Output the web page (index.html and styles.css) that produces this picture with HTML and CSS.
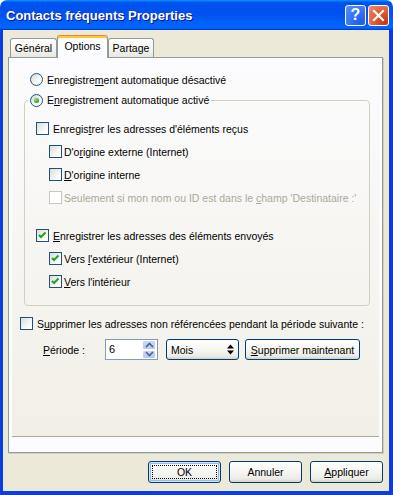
FILE: index.html
```html
<!DOCTYPE html>
<html lang="fr">
<head>
    <meta charset="UTF-8">
    <title>Contacts fréquents Properties</title>
    <link rel="stylesheet" href="styles.css">
</head>
<body>

<div class="window">
    <!-- barre de titre -->
    <div class="titlebar">
        <span class="title">Contacts fréquents Properties</span>
        <span class="tb-btn help">?</span>
        <span class="tb-btn close">
            <svg width="13" height="13" viewBox="0 0 13 13"><path d="M2 2 L11 11 M11 2 L2 11" stroke="#fff" stroke-width="2.2" stroke-linecap="square"/></svg>
        </span>
    </div>

    <div class="client">
        <div class="tabs">
            <div class="tab tab-general">Général</div>
            <div class="tab tab-options active">Options</div>
            <div class="tab tab-partage">Partage</div>
        </div>

        <div class="panel">
            <div class="page">
                <div class="row radio-row">
                    <span class="rb"></span>
                    <span>Enregistre<u>m</u>ent automatique désactivé</span>
                </div>

                <fieldset class="group">
                    <legend>
                        <span class="row">
                            <span class="rb on"><span class="dot"></span></span>
                            <span>E<u>n</u>registrement automatique activé</span>
                        </span>
                    </legend>
                    <div class="group-body">
                        <div class="row">
                            <span class="cb"></span>
                            <span>Enregis<u>t</u>rer les adresses d'éléments reçus</span>
                        </div>
                        <div class="row sub">
                            <span class="cb"></span>
                            <span>D'o<u>r</u>igine externe (Internet)</span>
                        </div>
                        <div class="row sub">
                            <span class="cb"></span>
                            <span><u>D</u>'origine interne</span>
                        </div>
                        <div class="row sub disabled">
                            <span class="cb off"></span>
                            <span>Seulement si mon nom ou ID est dans le <u>c</u>hamp 'Destinataire :'</span>
                        </div>

                        <div class="row spaced">
                            <span class="cb"><svg class="tick" width="11" height="11" viewBox="0 0 11 11"><polyline points="2,5 4,7 8.5,2.5" fill="none" stroke="#21A121" stroke-width="2"/></svg></span>
                            <span><u>E</u>nregistrer les adresses des éléments envoyés</span>
                        </div>
                        <div class="row sub">
                            <span class="cb"><svg class="tick" width="11" height="11" viewBox="0 0 11 11"><polyline points="2,5 4,7 8.5,2.5" fill="none" stroke="#21A121" stroke-width="2"/></svg></span>
                            <span>Vers <u>l</u>'extérieur (Internet)</span>
                        </div>
                        <div class="row sub">
                            <span class="cb"><svg class="tick" width="11" height="11" viewBox="0 0 11 11"><polyline points="2,5 4,7 8.5,2.5" fill="none" stroke="#21A121" stroke-width="2"/></svg></span>
                            <span><u>V</u>ers l'intérieur</span>
                        </div>
                    </div>
                </fieldset>

                <div class="row purge-row">
                    <span class="cb"></span>
                    <span>S<u>u</u>pprimer les adresses non référencées pendant la période suivante :</span>
                </div>

                <div class="period-row">
                    <span class="period-label"><u>P</u>ériode :</span>
                    <span class="spin-input">6</span>
                    <span class="spin">
                        <span class="spin-half">
                            <svg width="9" height="6" viewBox="0 0 9 6"><polyline points="1,5 4.5,1.5 8,5" fill="none" stroke="#4D6185" stroke-width="1.6"/></svg>
                        </span>
                        <span class="spin-half">
                            <svg width="9" height="6" viewBox="0 0 9 6"><polyline points="1,1 4.5,4.5 8,1" fill="none" stroke="#4D6185" stroke-width="1.6"/></svg>
                        </span>
                    </span>
                    <span class="select">
                        <span class="select-text">Mois</span>
                        <svg width="7" height="11" viewBox="0 0 7 11"><polygon points="0,4.5 3.5,0.5 7,4.5" fill="#000"/><polygon points="0,6.5 3.5,10.5 7,6.5" fill="#000"/></svg>
                    </span>
                    <span class="btn purge-btn"><u>S</u>upprimer maintenant</span>
                </div>
            </div>
        </div>

        <div class="buttons">
            <span class="btn default"><span class="focus">OK</span></span>
            <span class="btn">Annuler</span>
            <span class="btn"><u>A</u>ppliquer</span>
        </div>
    </div>
</div>

</body>
</html>
```

FILE: styles.css
```css
* {
    box-sizing: border-box;
}
body {
    margin: 0;
    font-family: "Liberation Sans", Arial, sans-serif;
    font-size: 10.5px;
    color: #000;
    background: #fff;
}
u {
    text-decoration: underline;
    text-underline-offset: 1px;
}
.window {
    width: 393px;
    height: 495px;
    display: flex;
    flex-direction: column;
    border-radius: 7px 7px 0 0;
    overflow: hidden;
}

/* barre de titre */
.titlebar {
    height: 30px;
    flex: none;
    display: flex;
    align-items: center;
    padding: 0 4px 0 6px;
    background: linear-gradient(to bottom, #0997ff 0%, #0053ee 8%, #0050ee 40%, #0066ff 88%, #0066ff 93%, #005bff 95%, #003dd7 96%, #003dd7 100%);
}
.title {
    flex: 1;
    color: #fff;
    font-weight: bold;
    font-size: 13px;
    text-shadow: 1px 1px #0f1089;
}
.tb-btn {
    width: 21px;
    height: 21px;
    margin-left: 2px;
    border: 1px solid #fff;
    border-radius: 3px;
    display: flex;
    align-items: center;
    justify-content: center;
}
.help {
    background: radial-gradient(circle at 80% 85%, #1e5ee8 0%, #2e6ff5 40%, #5a92fb 100%);
    color: #fff;
    font-weight: bold;
    font-size: 16px;
}
.close {
    background: radial-gradient(circle at 85% 85%, #c83511 0%, #e0592e 45%, #f08d6a 100%);
}

/* zone client */
.client {
    flex: 1;
    display: flex;
    flex-direction: column;
    background: #ece9d8;
    border: solid #0b3ee0;
    border-width: 0 4px 4px 3px;
    padding: 5px 6px 0 5px;
}
.tabs {
    height: 22px;
    display: flex;
    padding-left: 2px;
}
.tab {
    height: 19px;
    margin-top: 3px;
    border: 1px solid #919b9c;
    border-bottom: none;
    border-radius: 3px 3px 0 0;
    background: linear-gradient(#ffffff, #f3f3ef 60%, #e8e7e0);
    display: flex;
    align-items: center;
    justify-content: center;
}
.tab-general {
    width: 47px;
}
.tab-options {
    width: 51px;
}
.tab-partage {
    width: 46px;
}
.tab.active {
    height: 23px;
    margin-top: 0;
    margin-bottom: -1px;
    position: relative;
    z-index: 1;
    border-top: 1px solid #e68b2c;
    box-shadow: inset 0 2px #ffc73c;
    background: #fcfcfe;
    padding-bottom: 2px;
}

.panel {
    height: 396px;
    width: 375px;
    border: 1px solid #919b9c;
    background: #fcfcfe;
    box-shadow: 1px 1px 0 #d0cebf;
    padding: 0 3px;
}
.page {
    height: 379px;
    padding: 10px 0 0 8px;
    background: linear-gradient(#fcfcfe, #f1efe6);
    border-bottom: 1px solid #aca899;
}

/* lignes */
.row {
    height: 23px;
    display: flex;
    align-items: center;
    white-space: nowrap;
}
.radio-row {
    margin-left: 10px;
}
.sub {
    margin-left: 13px;
}
.spaced {
    margin-top: 15px;
}
.disabled {
    color: #aca899;
}
.rb {
    width: 13px;
    height: 13px;
    flex: none;
    margin-right: 4px;
    border: 1px solid #1c5180;
    border-radius: 50%;
    background: linear-gradient(to bottom right, #d6d6cf, #ffffff 75%);
    display: flex;
    align-items: center;
    justify-content: center;
}
.dot {
    width: 5px;
    height: 5px;
    border-radius: 50%;
    background: radial-gradient(circle at 35% 35%, #8ae68a, #21a121 70%);
}
.cb {
    width: 13px;
    height: 13px;
    flex: none;
    margin-right: 4px;
    border: 1px solid #1c5180;
    background: linear-gradient(to bottom right, #dcdcd7, #ffffff 80%);
    display: flex;
    align-items: center;
    justify-content: center;
}
.cb.off {
    border-color: #cac8bb;
    background: #fff;
}
.sub .cb {
    margin-right: 2px;
}

/* zone de groupe */
.group {
    margin: -1px 9px 0 4px;
    padding: 7px 0 12px 0;
    border: 1px solid #d0d0bf;
    border-radius: 4px;
    min-width: 0;
}
.group legend {
    padding: 0 2px;
    margin-left: 3px;
}
.group legend .row {
    height: 20px;
}
.group-body {
    padding-left: 11px;
}

.purge-row {
    margin-top: 6px;
}
.period-row {
    height: 21px;
    margin-top: 4px;
    display: flex;
    align-items: center;
    white-space: nowrap;
}
.period-label {
    width: 85px;
    padding-left: 23px;
}
.spin-input {
    width: 37px;
    height: 21px;
    border: 1px solid #7f9db9;
    border-right: none;
    background: #fff;
    padding: 3px 0 0 3px;
    font-size: 11px;
}
.spin {
    width: 16px;
    height: 21px;
    border: 1px solid #7f9db9;
    border-left: none;
    display: flex;
    flex-direction: column;
    background: #fff;
}
.spin-half {
    flex: 1;
    margin: 0 1px 0 0;
    border: 1px solid #fff;
    border-radius: 2px;
    background: linear-gradient(#c9d8fc, #b4c8f6);
    display: flex;
    align-items: center;
    justify-content: center;
}
.select {
    width: 73px;
    height: 21px;
    margin-left: 8px;
    border: 1px solid #003c74;
    border-radius: 3px;
    background: linear-gradient(#ffffff, #f3f3ef 60%, #ecebe6 85%, #d6d0c5);
    display: flex;
    align-items: center;
    padding: 0 4px 0 4px;
}
.select-text {
    flex: 1;
}

/* boutons */
.btn {
    height: 22px;
    border: 1px solid #003c74;
    border-radius: 3px;
    background: linear-gradient(#ffffff, #f4f4f0 55%, #ecebe6 85%, #d6d0c5);
    display: flex;
    align-items: center;
    justify-content: center;
    white-space: nowrap;
}
.purge-btn {
    width: 115px;
    height: 21px;
    margin-left: 6px;
}
.buttons {
    display: flex;
    justify-content: flex-end;
    gap: 8px;
    margin-top: 8px;
}
.buttons .btn {
    width: 73px;
}
.btn.default {
    box-shadow: inset 0 0 0 1px #cee7ff, inset 0 0 0 2px #98b8ea;
    padding: 3px;
}
.focus {
    flex: 1;
    align-self: stretch;
    border: 1px dotted #000;
    display: flex;
    align-items: center;
    justify-content: center;
}
```
